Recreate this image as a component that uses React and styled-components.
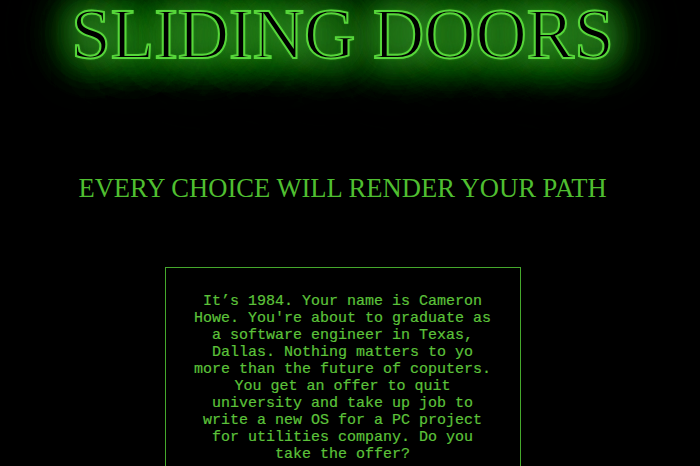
import React from 'react';
import styled, { createGlobalStyle } from 'styled-components';

const GlobalStyle = createGlobalStyle`
  html, body {
    margin: 0;
    padding: 0;
    background: #000;
  }
  body {
    overflow: hidden;
  }
`;

const Page = styled.div`
  width: 685px;
  min-height: 466px;
  display: flex;
  flex-direction: column;
  align-items: center;
  background: #000;
`;

const Title = styled.h1`
  margin: -6px 0 0;
  font-family: 'Liberation Serif', 'Times New Roman', serif;
  font-size: 71px;
  font-weight: normal;
  line-height: normal;
  color: #000;
  -webkit-text-stroke: 2px #56d63a;
  text-shadow:
    0 0 3px #3fae2a,
    0 0 25px #2f8a24,
    0 0 35px #2f8a24,
    0 0 35px #2f8a24,
    0 0 50px #2f8a24,
    0 0 50px #2f8a24,
    0 0 50px #2f8a24,
    0 0 65px #2a7a20,
    0 0 65px #2a7a20,
    0 0 65px #2a7a20,
    0 0 85px #236a1b,
    0 0 85px #236a1b;
`;

const Tagline = styled.h2`
  margin: 98px 0 0;
  font-family: 'Liberation Serif', 'Times New Roman', serif;
  font-size: 26.6px;
  font-weight: normal;
  line-height: normal;
  color: #4fbe30;
`;

const StoryBox = styled.div`
  margin-top: 63px;
  width: 306px;
  padding: 25px 24px 24px;
  border: 1px solid #45a82c;
  font-family: 'Liberation Mono', 'Courier New', monospace;
  font-size: 15px;
  line-height: normal;
  color: #5cc23a;
  text-align: center;
  -webkit-text-stroke: 0.2px #5cc23a;
`;

const App = () => {
  return (
    <>
      <GlobalStyle />
      <Page>
        <Title>SLIDING DOORS</Title>
        <Tagline>EVERY CHOICE WILL RENDER YOUR PATH</Tagline>
        <StoryBox>
          It’s 1984. Your name is Cameron Howe. You're about to graduate as a
          software engineer in Texas, Dallas. Nothing matters to yo more than
          the future of coputers. You get an offer to quit university and take
          up job to write a new OS for a PC project for utilities company. Do
          you take the offer?
        </StoryBox>
      </Page>
    </>
  );
};

export default App;
